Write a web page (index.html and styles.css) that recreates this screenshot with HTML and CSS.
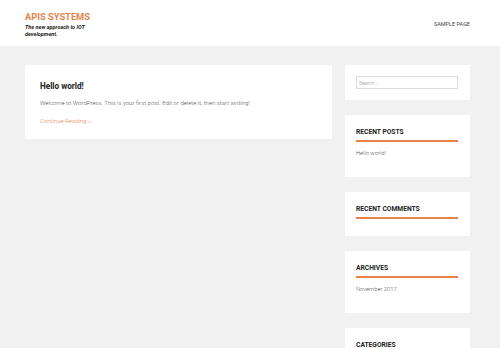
FILE: index.html
```html
<!DOCTYPE html>
<html lang="en">

<head>
  <meta charset="UTF-8" />
  <meta name="viewport" content="width=device-width, initial-scale=1.0" />
  <title>APIS SYSTEMS</title>
  <link rel="stylesheet" href="styles.css">
</head>

<body>
  <header class="site-header">
    <div class="branding">
      <h1 class="site-title">APIS SYSTEMS</h1>
      <p class="site-description">The new approach to IOT development.</p>
    </div>
    <nav class="main-nav">
      <a href="#">Sample Page</a>
    </nav>
  </header>

  <div class="site-content">
    <main class="content-area">
      <article class="post">
        <h2 class="entry-title">Hello world!</h2>
        <p class="entry-summary">Welcome to WordPress. This is your first post. Edit or delete it, then start writing!</p>
        <a class="read-more" href="#">Continue Reading&rarr;</a>
      </article>
    </main>

    <aside class="sidebar">
      <section class="widget widget-search">
        <input type="search" class="search-field" placeholder="Search ..." />
      </section>

      <section class="widget">
        <h3 class="widget-title">Recent Posts</h3>
        <ul>
          <li><a href="#">Hello world!</a></li>
        </ul>
      </section>

      <section class="widget">
        <h3 class="widget-title">Recent Comments</h3>
      </section>

      <section class="widget">
        <h3 class="widget-title">Archives</h3>
        <ul>
          <li><a href="#">November 2017</a></li>
        </ul>
      </section>

      <section class="widget">
        <h3 class="widget-title">Categories</h3>
        <ul>
          <li><a href="#">Uncategorized</a></li>
        </ul>
      </section>

      <section class="widget">
        <h3 class="widget-title">Meta</h3>
        <ul>
          <li><a href="#">Log in</a></li>
          <li><a href="#">Entries RSS</a></li>
          <li><a href="#">Comments RSS</a></li>
          <li><a href="#">WordPress.org</a></li>
        </ul>
      </section>
    </aside>
  </div>
</body>

</html>
```

FILE: styles.css
```css
:root {
  --bg: #f1f1f1;
  --orange: #e8824b;
  --text: #333;
  --muted: #777;
}

* {
  margin: 0;
  padding: 0;
  box-sizing: border-box;
  font-family: Roboto, 'Liberation Sans', sans-serif;
}

body {
  background: var(--bg);
  color: var(--text);
}

a {
  text-decoration: none;
  color: inherit;
}

.site-header {
  background: white;
  height: 46px;
  padding: 10px 30px 0 25px;
  display: flex;
  justify-content: space-between;
  align-items: flex-start;
}

.site-title {
  color: var(--orange);
  font-size: 9.3px;
  font-weight: 700;
  line-height: 13px;
}

.site-description {
  width: 75px;
  margin-top: 1px;
  font-size: 5.5px;
  font-weight: 700;
  font-style: italic;
  line-height: 7px;
  color: #222;
}

.main-nav {
  padding-top: 10px;
  font-size: 5.5px;
  line-height: 8px;
}

.main-nav a {
  font-weight: 400;
  text-transform: uppercase;
  color: #444;
}

.site-content {
  display: flex;
  gap: 13px;
  align-items: flex-start;
  padding: 19px 30px 40px 25px;
}

.content-area {
  width: 307px;
}

.post {
  background: white;
  padding: 15px 15px 12px;
}

.entry-title {
  font-size: 8.2px;
  font-weight: 700;
  line-height: 12px;
  color: #222;
}

.entry-summary {
  margin-top: 6px;
  font-size: 6px;
  font-weight: 300;
  line-height: 10px;
  color: #555;
}

.read-more {
  display: inline-block;
  margin-top: 6px;
  font-size: 6px;
  font-weight: 300;
  line-height: 10px;
  color: var(--orange);
}

.sidebar {
  width: 125px;
  display: flex;
  flex-direction: column;
  gap: 15px;
}

.widget {
  background: white;
  padding: 13px 11px 17px;
}

.widget-search {
  padding: 11px;
}

.search-field {
  display: block;
  width: 102px;
  height: 13px;
  border: 1px solid #ddd;
  padding: 0 2px;
  font-size: 5px;
  font-weight: 300;
  color: #555;
  outline: none;
}

.search-field::placeholder {
  color: #888;
}

.widget-title {
  font-size: 6.7px;
  font-weight: 700;
  text-transform: uppercase;
  line-height: 9px;
  padding-bottom: 3px;
  border-bottom: 2px solid var(--orange);
  color: #222;
  width: 102px;
}

.widget ul {
  list-style: none;
  margin: 6px 0 2px;
}

.widget li {
  font-size: 5.8px;
  font-weight: 300;
  line-height: 10px;
  color: #555;
}
```
